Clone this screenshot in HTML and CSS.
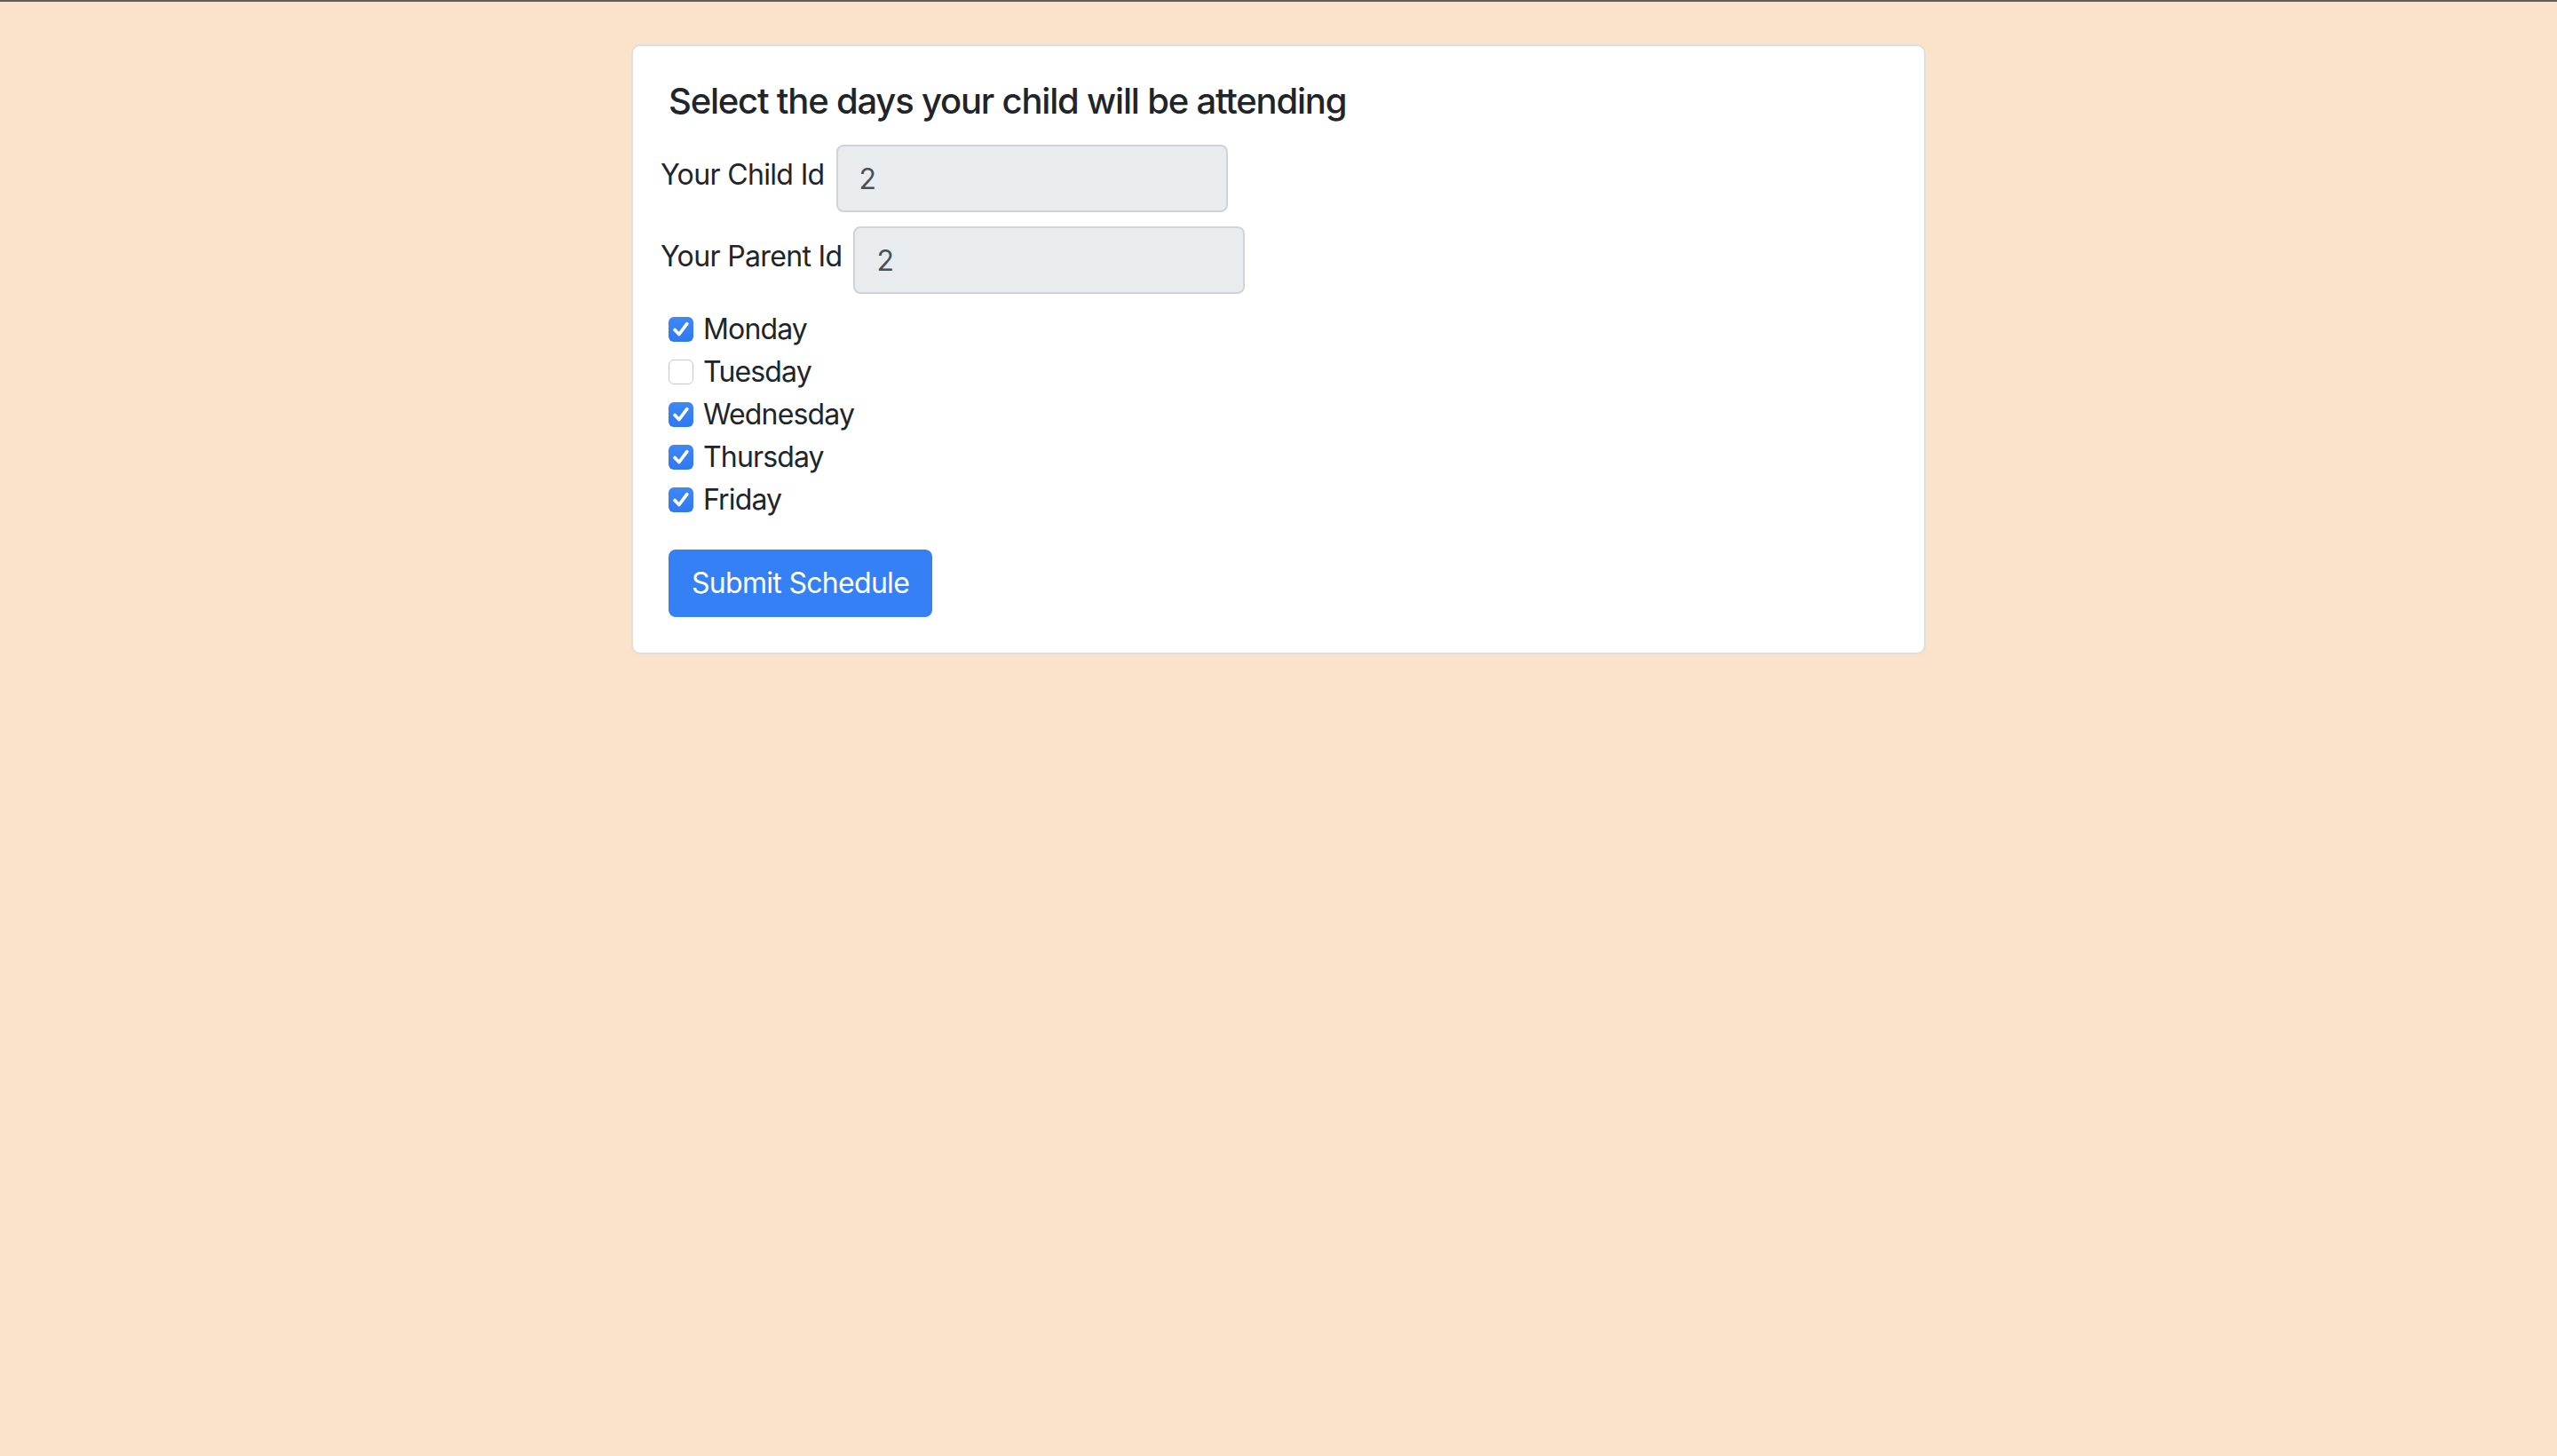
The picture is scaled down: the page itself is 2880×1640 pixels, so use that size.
FILE: index.html
```html
<!DOCTYPE html>
<html lang="en">
<head>
<meta charset="utf-8">
<title>Schedule</title>
<link rel="stylesheet" href="styles.css">
</head>
<body>
<div class="topline"></div>
<main class="card">
  <h5 class="title">Select the days your child will be attending</h5>
  <form class="form">
    <div class="row">
      <label class="field-label" for="child">Your Child Id</label>
      <input class="field" id="child" type="text" value="2" readonly>
    </div>
    <div class="row">
      <label class="field-label" for="parent">Your Parent Id</label>
      <input class="field" id="parent" type="text" value="2" readonly>
    </div>
    <div class="days">
      <label class="day"><span class="box checked"><svg viewBox="0 0 28 28" width="28" height="28"><path d="M7 14.5 L11.8 19.6 L20.8 7.6" fill="none" stroke="#fff" stroke-width="3.6" stroke-linecap="round" stroke-linejoin="round"/></svg></span>Monday</label>
      <label class="day"><span class="box"></span>Tuesday</label>
      <label class="day"><span class="box checked"><svg viewBox="0 0 28 28" width="28" height="28"><path d="M7 14.5 L11.8 19.6 L20.8 7.6" fill="none" stroke="#fff" stroke-width="3.6" stroke-linecap="round" stroke-linejoin="round"/></svg></span>Wednesday</label>
      <label class="day"><span class="box checked"><svg viewBox="0 0 28 28" width="28" height="28"><path d="M7 14.5 L11.8 19.6 L20.8 7.6" fill="none" stroke="#fff" stroke-width="3.6" stroke-linecap="round" stroke-linejoin="round"/></svg></span>Thursday</label>
      <label class="day"><span class="box checked"><svg viewBox="0 0 28 28" width="28" height="28"><path d="M7 14.5 L11.8 19.6 L20.8 7.6" fill="none" stroke="#fff" stroke-width="3.6" stroke-linecap="round" stroke-linejoin="round"/></svg></span>Friday</label>
    </div>
    <button class="btn" type="button">Submit Schedule</button>
  </form>
</main>
</body>
</html>
```
FILE: styles.css
```css
* { box-sizing: border-box; }
html, body { margin: 0; padding: 0; }
body {
  background: #fae3c8;
  font-family: Inter, "Noto Sans", "Liberation Sans", sans-serif;
  color: #212529;
  font-size: 32px;
  line-height: 48px;
  min-height: 1640px;
}
.topline {
  height: 2px;
  background: #5e5e5e;
}
.card {
  width: 1458px;
  margin: 48px auto 0;
  background: #fff;
  border: 2px solid #dfdfdf;
  border-radius: 10px;
  padding: 38px 40px 40px;
}
.title {
  margin: 0 0 25px;
  font-size: 40px;
  line-height: 48px;
  font-weight: 500;
  letter-spacing: -1.2px;
}
.form { display: flex; flex-direction: column; align-items: flex-start; }
.row {
  display: flex;
  align-items: center;
  gap: 13px;
  margin: 0 0 16px -9px;
}
.field-label {
  margin-bottom: 8px;
  letter-spacing: -0.65px;
}
.field {
  width: 441px;
  height: 76px;
  padding: 0 24px;
  font: inherit;
  font-size: 32px;
  color: #495057;
  background: #e9ecef;
  border: 2px solid #ced4da;
  border-radius: 8px;
  outline: none;
}
.days { display: flex; flex-direction: column; }
.day {
  display: flex;
  align-items: center;
  height: 48px;
  letter-spacing: -0.85px;
}
.box {
  width: 28px;
  height: 28px;
  margin-right: 11px;
  border-radius: 6px;
  border: 1px solid #c9c9c9;
  background: #fff;
  display: flex;
  flex: none;
}
.box.checked {
  border: none;
  background: linear-gradient(#3e88f7, #2f78f0);
}
.btn {
  margin-top: 32px;
  font: inherit;
  font-size: 32px;
  line-height: 48px;
  color: #fff;
  background: #3580f4;
  border: 2px solid #3580f4;
  border-radius: 8px;
  padding: 12px 24px;
  letter-spacing: -0.7px;
}
```
